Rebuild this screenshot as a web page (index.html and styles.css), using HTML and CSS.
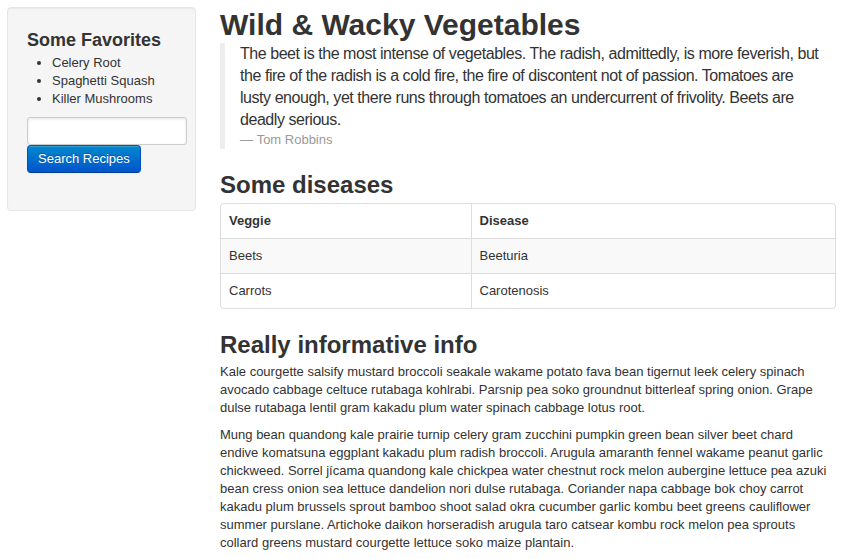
FILE: index.html
```html
<!DOCTYPE html>
<html>
<head>
<meta charset="utf-8">
<title>Wild &amp; Wacky Vegetables</title>
<link rel="stylesheet" href="styles.css">
</head>
<body>
<div class="layout">
  <aside class="well">
    <h3 class="side-title">Some Favorites</h3>
    <ul class="fav-list">
      <li>Celery Root</li>
      <li>Spaghetti Squash</li>
      <li>Killer Mushrooms</li>
    </ul>
    <form class="search-form">
      <input type="text" class="search-input">
      <button type="button" class="btn-primary">Search Recipes</button>
    </form>
  </aside>
  <main class="content">
    <h1 class="page-title">Wild &amp; Wacky Vegetables</h1>
    <blockquote class="quote">
      <p>The beet is the most intense of vegetables. The radish, admittedly, is more feverish, but the fire of the radish is a cold fire, the fire of discontent not of passion. Tomatoes are lusty enough, yet there runs through tomatoes an undercurrent of frivolity. Beets are deadly serious.</p>
      <small>Tom Robbins</small>
    </blockquote>
    <h2 class="section-title">Some diseases</h2>
    <div class="table-wrap">
      <table class="data-table">
        <colgroup><col class="col-first"><col></colgroup>
        <thead>
          <tr><th>Veggie</th><th>Disease</th></tr>
        </thead>
        <tbody>
          <tr class="odd"><td>Beets</td><td>Beeturia</td></tr>
          <tr><td>Carrots</td><td>Carotenosis</td></tr>
        </tbody>
      </table>
    </div>
    <h2 class="section-title">Really informative info</h2>
    <p class="text">Kale courgette salsify mustard broccoli seakale wakame potato fava bean tigernut leek celery spinach avocado cabbage celtuce rutabaga kohlrabi. Parsnip pea soko groundnut bitterleaf spring onion. Grape dulse rutabaga lentil gram kakadu plum water spinach cabbage lotus root.</p>
    <p class="text">Mung bean quandong kale prairie turnip celery gram zucchini pumpkin green bean silver beet chard endive komatsuna eggplant kakadu plum radish broccoli. Arugula amaranth fennel wakame peanut garlic chickweed. Sorrel jícama quandong kale chickpea water chestnut rock melon aubergine lettuce pea azuki bean cress onion sea lettuce dandelion nori dulse rutabaga. Coriander napa cabbage bok choy carrot kakadu plum brussels sprout bamboo shoot salad okra cucumber garlic kombu beet greens cauliflower summer purslane. Artichoke daikon horseradish arugula taro catsear kombu rock melon pea sprouts collard greens mustard courgette lettuce soko maize plantain.</p>
  </main>
</div>
</body>
</html>
```
FILE: styles.css
```css
html, body {
  margin: 0;
  padding: 0;
  background: #fff;
}
body {
  font-family: "Liberation Sans", Arial, sans-serif;
  font-size: 13px;
  line-height: 18px;
  color: #333;
}
.layout {
  display: flex;
  align-items: flex-start;
  gap: 24px;
  padding: 7px 21px 0 7px;
}
.well {
  flex: 0 0 189px;
  width: 189px;
  min-width: 0;
  box-sizing: border-box;
  background: #f5f5f5;
  border: 1px solid #e6e6e6;
  border-radius: 4px;
  padding: 19px;
  box-shadow: inset 0 1px 1px rgba(0,0,0,0.05);
}
.side-title {
  margin: 0;
  font-size: 18px;
  line-height: 27px;
  font-weight: bold;
  color: #333;
}
.fav-list {
  margin: 0 0 9px 25px;
  padding: 0;
}
.fav-list li {
  line-height: 18px;
}
.search-form {
  margin: 0 0 18px;
  display: flex;
  flex-direction: column;
  align-items: flex-start;
}
.search-input {
  box-sizing: border-box;
  width: 160px;
  flex: none;
  height: 28px;
  margin: 0;
  padding: 4px;
  border: 1px solid #ccc;
  border-radius: 3px;
  background: #fff;
  box-shadow: inset 0 1px 3px rgba(0,0,0,0.1);
  font-family: inherit;
  font-size: 13px;
}
.btn-primary {
  box-sizing: border-box;
  height: 28px;
  padding: 4px 10px;
  margin: 0;
  font-family: inherit;
  font-size: 13px;
  line-height: 18px;
  color: #fff;
  text-shadow: 0 -1px 0 rgba(0,0,0,0.25);
  background: linear-gradient(to bottom, #0088cc, #0055cc);
  border: 1px solid #0052c2;
  border-bottom-color: #003f94;
  border-radius: 4px;
  box-shadow: inset 0 1px 0 rgba(255,255,255,0.2), 0 1px 2px rgba(0,0,0,0.05);
  cursor: pointer;
}
.content {
  flex: 1 1 auto;
  min-width: 0;
}
.page-title {
  margin: 0;
  font-size: 30px;
  line-height: 36px;
  font-weight: bold;
  color: #333;
}
.quote {
  margin: 0 0 18px;
  padding: 0 14px 0 15px;
  border-left: 5px solid #eee;
}
.quote p {
  margin: 0;
  font-size: 16px;
  line-height: 22px;
  font-weight: 300;
  letter-spacing: -0.45px;
}
.quote small {
  display: block;
  font-size: 13px;
  line-height: 18px;
  color: #999;
}
.quote small::before {
  content: "\2014 \00A0";
}
.section-title {
  margin: 0;
  font-size: 24px;
  line-height: 36px;
  font-weight: bold;
  color: #333;
}
.table-wrap {
  margin: 0 0 18px;
  border: 1px solid #ddd;
  border-radius: 4px;
  overflow: hidden;
}
.data-table {
  width: 100%;
  border-collapse: collapse;
  table-layout: fixed;
}
.col-first {
  width: 250px;
}
.data-table th,
.data-table td {
  padding: 8px;
  line-height: 18px;
  text-align: left;
  vertical-align: top;
  border-top: 1px solid #ddd;
}
.data-table th + th,
.data-table td + td {
  border-left: 1px solid #ddd;
}
.data-table thead tr th {
  border-top: 0;
  font-weight: bold;
}
.data-table tr.odd td {
  background: #f9f9f9;
}
.text {
  margin: 0 0 9px;
  padding-right: 5px;
}
```
